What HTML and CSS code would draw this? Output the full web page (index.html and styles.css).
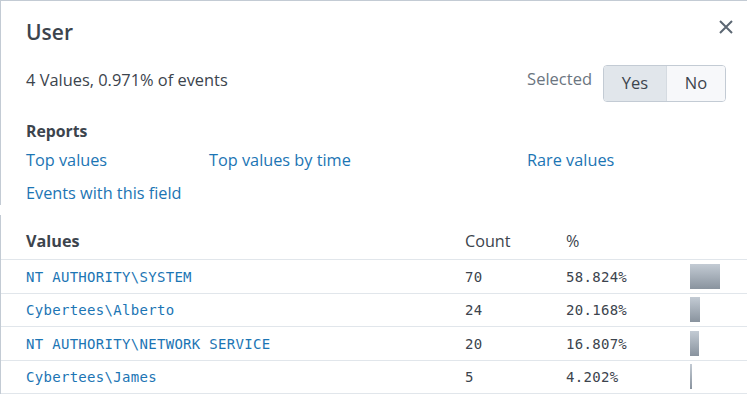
FILE: index.html
```html
<!DOCTYPE html>
<html>
<head>
<meta charset="utf-8">
<link rel="stylesheet" href="styles.css">
</head>
<body>
<div class="panel">
  <section class="top">
    <div class="head">
      <h1 class="title">User</h1>
      <button class="close" aria-label="Close">
        <svg width="14" height="14" viewBox="0 0 14 14"><path d="M1 1L13 13M13 1L1 13" stroke="#5c6773" stroke-width="2" fill="none"/></svg>
      </button>
    </div>
    <div class="summary">
      <span class="count-text">4 Values, 0.971% of events</span>
      <div class="selected">
        <span class="sel-label">Selected</span>
        <div class="toggle">
          <span class="opt active">Yes</span>
          <span class="opt">No</span>
        </div>
      </div>
    </div>
    <h2 class="reports">Reports</h2>
    <div class="links">
      <a class="link">Top values</a>
      <a class="link">Top values by time</a>
      <a class="link">Rare values</a>
      <a class="link">Events with this field</a>
    </div>
  </section>
  <section class="values">
    <div class="row header">
      <span class="c-val bold">Values</span>
      <span class="c-count">Count</span>
      <span class="c-pct">%</span>
      <span></span>
    </div>
    <div class="row">
      <span class="c-val mono link">NT AUTHORITY\SYSTEM</span>
      <span class="c-count mono">70</span>
      <span class="c-pct mono">58.824%</span>
      <span class="c-bar"><span class="bar" style="width:30px"></span></span>
    </div>
    <div class="row">
      <span class="c-val mono link">Cybertees\Alberto</span>
      <span class="c-count mono">24</span>
      <span class="c-pct mono">20.168%</span>
      <span class="c-bar"><span class="bar" style="width:10px"></span></span>
    </div>
    <div class="row">
      <span class="c-val mono link">NT AUTHORITY\NETWORK SERVICE</span>
      <span class="c-count mono">20</span>
      <span class="c-pct mono">16.807%</span>
      <span class="c-bar"><span class="bar" style="width:9px"></span></span>
    </div>
    <div class="row">
      <span class="c-val mono link">Cybertees\James</span>
      <span class="c-count mono">5</span>
      <span class="c-pct mono">4.202%</span>
      <span class="c-bar"><span class="bar" style="width:2px"></span></span>
    </div>
  </section>
</div>
</body>
</html>
```

FILE: styles.css
```css
html, body {
  margin: 0;
  padding: 0;
  background: #ffffff;
}
body {
  font-family: "Open Sans", Lato, sans-serif;
  color: #3c444d;
  font-size: 16px;
  overflow: hidden;
}
.panel {
  border-top: 1px solid #c3cbd4;
  height: 409px;
}
.top {
  border-left: 1px solid #c3cbd4;
  padding: 17px 0 2px 25px;
}
.head {
  display: flex;
  justify-content: space-between;
  align-items: flex-start;
  padding-right: 14px;
}
.title {
  margin: 0;
  font-size: 21px;
  font-weight: 600;
  line-height: 28px;
  color: #3c444d;
}
.close {
  border: 0;
  background: none;
  padding: 0;
  margin-top: 2px;
  width: 14px;
  height: 14px;
  display: block;
}
.close svg { display: block; }
.summary {
  margin-top: 19px;
  display: flex;
  justify-content: space-between;
  align-items: center;
  padding-right: 21px;
  height: 37px;
}
.count-text {
  font-size: 16.4px;
  line-height: 20px;
  margin-top: -8px;
}
.selected {
  display: flex;
  align-items: center;
  gap: 11px;
}
.sel-label {
  color: #6b7580;
  font-size: 16.5px;
  margin-top: -10px;
}
.toggle {
  display: flex;
  border: 1px solid #c3cbd4;
  border-radius: 4px;
  overflow: hidden;
  height: 35px;
}
.opt {
  display: flex;
  align-items: center;
  justify-content: center;
  font-size: 16.5px;
  background: #f7f8fa;
  color: #3c444d;
  width: 58px;
  padding-bottom: 3px;
}
.opt.active {
  background: #e1e6eb;
  width: 62px;
  border-right: 1px solid #d5dbe1;
}
.reports {
  margin: 19px 0 0;
  font-size: 15.8px;
  font-weight: 700;
  line-height: 20px;
}
.links {
  margin-top: 9px;
  display: grid;
  grid-template-columns: 183px 318px auto;
  row-gap: 13px;
}
.link {
  color: #1c75b4;
  font-size: 16.3px;
  line-height: 20px;
}
.values {
  margin-top: 10px;
  border-left: 1px solid #c3cbd4;
}
.row {
  display: grid;
  grid-template-columns: 464px 101px 124px 1fr;
  align-items: center;
  height: 32.5px;
  border-bottom: 1px solid #e1e6eb;
}
.row > :first-child {
  padding-left: 25px;
}
.row.header {
  height: 44px;
  align-items: end;
}
.row.header span {
  line-height: 20px;
  margin-bottom: 8px;
  font-size: 16.2px;
}
.bold { font-weight: 700; }
.mono {
  font-family: "DejaVu Sans Mono", monospace;
  font-size: 14px;
  letter-spacing: 0.3px;
  padding-top: 1px;
}
.c-count.mono, .c-pct.mono { color: #3c444d; }
.c-bar {
  display: flex;
  align-items: center;
}
.bar {
  display: block;
  height: 25px;
  background: linear-gradient(to bottom, #c3cbd4, #89939e);
}
```
